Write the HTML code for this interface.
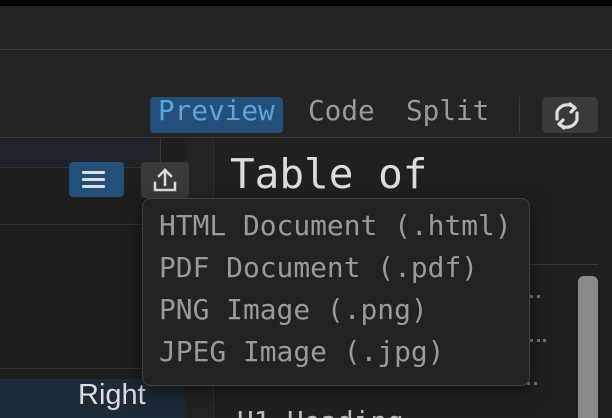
<!DOCTYPE html>
<html><head><meta charset="utf-8"><style>
*{margin:0;padding:0;box-sizing:border-box}
html,body{width:612px;height:418px;overflow:hidden}
body{background:#242424;position:relative;font-family:"DejaVu Sans Mono","Liberation Mono",monospace}
.a{position:absolute}
.mono{font-family:"DejaVu Sans Mono","Liberation Mono",monospace;white-space:nowrap}
</style></head><body>
<div class="a" style="left:0;top:0;width:612px;height:6px;background:#000"></div>
<div class="a" style="left:0;top:49px;width:612px;height:1px;background:#3a3a3a"></div>
<div class="a" style="left:150px;top:97px;width:133px;height:36px;background:#244f78;border-radius:4px"></div>
<div class="a mono" style="left:158px;top:93px;font-size:27.7px;line-height:36px;color:#5aa5e0">Preview</div>
<div class="a mono" style="left:308px;top:93px;font-size:27.7px;line-height:36px;color:#9a9a9a">Code</div>
<div class="a mono" style="left:406px;top:93px;font-size:27.7px;line-height:36px;color:#9a9a9a">Split</div>
<div class="a" style="left:519px;top:97px;width:1px;height:36px;background:#3a3a3a"></div>
<div class="a" style="left:542px;top:97px;width:56px;height:36px;background:#3a3a3a;border-radius:5px"></div>
<svg class="a" style="left:552px;top:101px" width="30" height="30" viewBox="0 0 30 30" fill="none" stroke="#ddd" stroke-width="3.2" stroke-linecap="round" stroke-linejoin="round">
<path d="M23 7 A11 11 0 0 0 5 11 L5 18"/><path d="M18 3 L23 7 L19 11"/>
<path d="M7 23 A11 11 0 0 0 25 19 L25 12"/><path d="M12 27 L7 23 L11 19"/></svg>
<div class="a" style="left:0;top:137px;width:612px;height:1px;background:#3a3a3a"></div>
<div class="a" style="left:0;top:138px;width:193px;height:280px;background:#1e1e1e"></div>
<div class="a" style="left:0;top:138px;width:155px;height:29px;background:#1e2229"></div>
<div class="a" style="left:155px;top:138px;width:5px;height:29px;background:#222"></div>
<div class="a" style="left:160px;top:138px;width:1px;height:29px;background:#3a3a3a"></div>
<div class="a" style="left:0;top:167px;width:193px;height:1px;background:#333"></div>
<div class="a" style="left:0;top:224px;width:193px;height:1px;background:#333"></div>
<div class="a" style="left:0;top:368px;width:193px;height:1px;background:#333"></div>
<div class="a" style="left:0;top:379px;width:185px;height:39px;background:#1d2a37"></div>
<div class="a" style="left:78px;top:375px;font-family:'Liberation Sans',sans-serif;font-size:29px;line-height:40px;color:#ddd">Right</div>
<div class="a" style="left:185px;top:138px;width:28px;height:280px;background:#232323"></div>
<div class="a" style="left:213px;top:138px;width:1px;height:280px;background:#333"></div>
<div class="a" style="left:214px;top:138px;width:398px;height:280px;background:#202020"></div>
<div class="a mono" style="left:230px;top:150px;font-size:41px;line-height:48px;color:#ddd">Table of</div>
<div class="a" style="left:530px;top:264px;width:68px;height:1px;background:#3a3a3a"></div>
<div class="a" style="left:578px;top:276px;width:20px;height:142px;background:#8a8a8a;border-radius:6px 6px 0 0"></div>
<div class="a" style="left:530px;top:295px;width:10px;height:4px;border-top:3px dotted #777"></div>
<div class="a" style="left:530px;top:339px;width:16px;height:4px;border-top:3px dotted #777"></div>
<div class="a" style="left:527px;top:382px;width:10px;height:4px;border-top:3px dotted #777"></div>
<div class="a" style="left:237px;top:404px;width:200px;height:14px;overflow:hidden"><div class="mono" style="font-size:27.7px;line-height:36px;color:#bbb">H1 Heading</div></div>
<div class="a" style="left:69px;top:162px;width:55px;height:35px;background:#244f78;border-radius:4px"></div>
<div class="a" style="left:82px;top:171px;width:23px;height:3px;background:#ddd;border-radius:1px"></div>
<div class="a" style="left:82px;top:178px;width:23px;height:3px;background:#ddd;border-radius:1px"></div>
<div class="a" style="left:82px;top:185px;width:23px;height:3px;background:#ddd;border-radius:1px"></div>
<div class="a" style="left:141px;top:162px;width:48px;height:36px;background:#3a3a3a;border-radius:4px"></div>
<svg class="a" style="left:151px;top:166px" width="28" height="28" viewBox="0 0 28 28" fill="none" stroke="#ddd" stroke-width="2.5" stroke-linecap="square">
<path d="M14 4 L14 19"/><path d="M8 10 L14 4 L20 10" stroke-linejoin="miter"/><path d="M4 17 L4 24 L24 24 L24 17"/></svg>
<div class="a" style="left:142px;top:198px;width:388px;height:188px;background:#222;border:1.5px solid #444;border-radius:9px;box-shadow:0 6px 20px rgba(0,0,0,.5)"></div>
<div class="a mono" style="left:159px;top:205px;font-size:27.9px;line-height:42px;color:#9a9a9a">HTML Document (.html)<br>PDF Document (.pdf)<br>PNG Image (.png)<br>JPEG Image (.jpg)</div>
</body></html>
